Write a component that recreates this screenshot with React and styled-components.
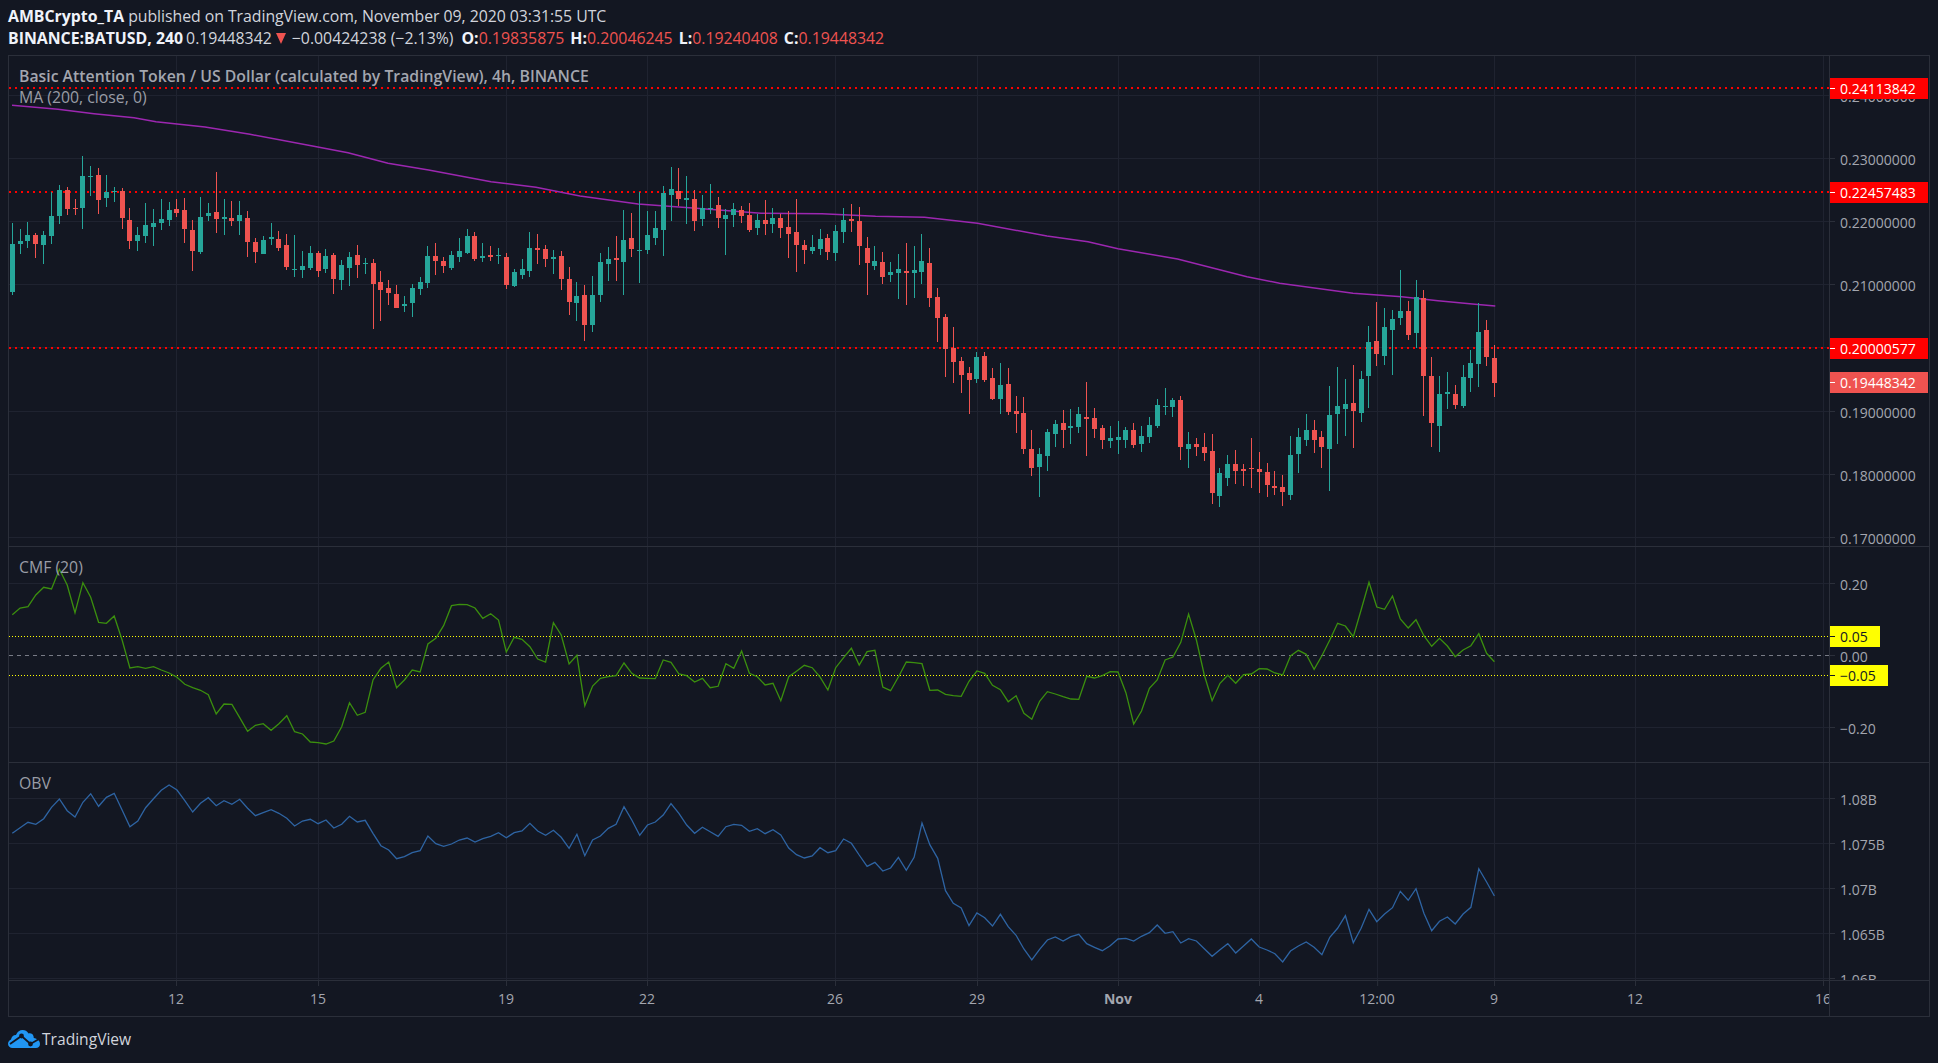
import React from "react";
import styled, { createGlobalStyle } from "styled-components";

const BG = "#131722";
const GRID = "#1f2330";
const BORDER = "#2b2f3a";
const TEAL = "#26a69a";
const RED = "#ef5350";
const AXIS_TEXT = "#a3a6af";
const FONT = `"Open Sans", "Noto Sans", "Liberation Sans", sans-serif`;

const seg = (y0, rows) =>
  rows.map(([up, wt, bt, bb, wb]) => ({
    up: up === 1,
    wt: y0 + wt / 3,
    bt: y0 + bt / 3,
    bb: y0 + bb / 3,
    wb: y0 + wb / 3,
  }));

const CANDLES = [
  ...seg(150, [
    [1,219,282,426,435],[1,237,273,282,312],[1,216,255,273,294],[0,249,255,282,324],[1,243,255,285,342],
    [1,126,198,258,282],[1,105,120,198,222],[0,111,120,177,195],[0,147,174,177,195],[1,18,78,174,237],
    [1,48,78,81,138],[0,54,75,150,192],[1,75,126,144,171],[1,111,123,126,156],[0,114,123,204,237],
    [0,174,210,273,297],[1,231,255,273,303],[1,159,225,258,279],[1,177,219,231,288],[1,147,207,219,240],
    [1,156,180,210,228],[0,147,177,189,201],[0,144,180,237,279],[0,210,240,303,363],[1,141,201,306,312],
    [1,159,189,198,213],[0,66,186,207,249],[1,147,201,207,255],[0,153,204,213,228],[1,153,195,213,255],
    [0,183,204,276,321],
  ]),
  ...seg(190, [
    [0,144,156,186,219],[1,138,150,192,192],[1,99,141,147,165],[0,123,147,174,183],[0,132,165,231,240],
    [1,135,237,240,261],[1,183,228,240,264],[1,168,189,234,240],[0,183,189,243,261],[1,177,198,237,249],
    [0,189,195,267,312],[1,210,225,270,300],[1,186,201,234,288],[0,165,195,225,264],[1,204,219,222,252],
    [0,207,219,282,417],[0,243,276,300,393],[0,270,294,309,345],[0,285,312,354,354],[1,318,342,348,366],
    [1,282,294,339,381],[1,261,276,297,315],[1,168,198,279,294],[0,159,198,213,255],[0,201,213,228,249],
    [1,183,195,234,240],[1,144,183,201,216],[1,117,138,189,192],[0,126,138,207,213],[1,159,198,204,216],
    [0,168,195,201,213],[1,174,195,198,222],
  ]),
  ...seg(150, [
    [0,309,321,405,417],[1,357,366,408,411],[1,327,357,375,387],[1,246,294,363,381],[0,252,294,300,342],
    [0,285,297,327,351],[1,300,321,327,372],[0,303,318,387,420],[0,351,387,456,495],[1,396,438,459,513],
    [0,405,435,525,573],[1,378,435,525,546],[1,309,336,435,456],[1,291,327,342,393],[0,258,324,330,393],
    [1,180,270,336,435],[0,189,264,297,321],[1,126,300,303,399],[1,183,255,300,312],[1,183,234,264,285],
    [1,108,129,240,318],[1,51,117,135,213],[0,54,123,147,168],[1,78,144,150,222],[0,120,147,213,243],
    [1,135,174,207,228],
    [1,102,174,177,192],[0,141,165,204,234],[1,177,195,207,315],[1,159,177,195,231],[0,168,180,198,219],
    [0,159,195,240,246],[1,192,210,234,255],[0,150,210,222,255],[1,174,204,222,249],[0,192,204,234,264],
    [0,183,231,252,324],[0,147,246,285,366],[0,270,285,300,342],[1,255,291,303,312],[1,237,267,297,315],
    [0,252,264,306,330],[1,225,243,309,333],[1,174,210,246,279],[0,162,207,213,246],[0,171,213,288,345],
    [0,261,294,339,435],[1,288,333,348,360],[0,306,336,381,402],[1,336,366,375,396],[1,312,357,369,447],
    [0,279,363,369,465],[1,288,360,369,444],[1,252,333,366,402],[0,294,339,444,471],[0,414,441,504,576],
    [0,492,501,597,681],[0,531,594,636,699],[0,621,633,675,729],[0,651,669,690,792],[1,606,621,687,699],
    [0,606,618,690,696],[0,654,684,747,750],[1,639,705,747,792],[0,654,702,786,795],[0,738,783,792,849],
    [0,741,789,897,912],[0,840,897,954,978],[1,894,912,951,1041],[1,837,846,918,963],[1,810,822,852,891],
    [0,780,819,840,894],[1,777,828,834,882],[1,771,792,831,849],[0,696,801,807,918],[0,774,804,837,864],
    [0,825,834,870,897],[1,828,864,873,894],[1,813,861,870,912],[1,831,840,870,894],[0,819,840,885,894],
    [1,828,858,882,906],[1,801,825,861,879],[1,747,765,828,834],[1,714,768,771,795],[1,744,750,771,801],
    [0,738,750,891,930],[1,846,882,897,954],[0,864,882,891,918],[0,849,891,909,933],[0,852,903,1029,1062],
    [1,954,969,1038,1071],[1,915,942,984,1008],[0,900,942,963,1002],[0,942,957,963,1008],[0,864,954,957,1014],
    [0,906,957,966,1029],[0,939,966,1005,1041],[0,963,1008,1014,1035],[0,975,1011,1026,1068],[1,858,915,1035,1050],
    [1,834,861,912,969],[1,792,840,870,888],[0,810,840,870,909],[0,843,861,891,954],[1,708,795,897,1023],
    [1,651,768,792,882],
  ]),
  ...seg(250, [
    [1,387,462,477,558],[0,345,459,483,594],[1,363,387,489,516],[1,228,276,378,474],[0,156,273,312,348],
    [1,174,231,318,345],[1,180,207,240,375],[1,60,183,204,225],[0,153,183,255,270],[1,90,141,249,294],
    [0,120,144,378,498],[0,321,378,519,591],[1,378,432,528,606],[1,366,426,432,477],[0,405,432,465,477],
    [1,345,381,468,474],[1,300,339,384,426],[1,159,246,342,411],[0,210,240,321,348],[0,285,324,399,441],
  ]),
];

const xOf = (i) => 12.3 + i * 7.842;

const MA_POINTS = [
  [12,105.3],[58,109.3],[94,113.7],[134,117.7],[156,121.7],[205,127],[250,134.3],[312.5,146],[348,152.7],[388,163.3],
  [428.6,170],[491,181.7],[536,187.3],[580,196],[638,204],[696,208.3],[761,213.3],[822,213.7],[875.5,216.3],[924.5,217.3],
  [977.5,223.3],[1047,236],[1088,241.7],[1118,248.7],[1177.5,259],[1247,276.7],[1279.6,283.3],[1353,293.3],[1401.7,296.7],
  [1438,300.7],[1475,304.3],[1495.3,306],
];

const CMF_RAW = [
  224,204,200,165,142,147,88,135,218,128,172,247,250,228,300,384,380,385,380,390,
  399,412,433,443,451,464,522,492,493,533,574,556,551,571,551,527,575,582,606,608,
  612,603,560,488,526,517,420,385,366,443,420,390,396,312,295,257,197,193,194,204,
  235,221,240,336,292,298,320,357,366,248,285,372,346,497,438,415,410,407,369,400,
  414,415,416,360,367,402,407,426,415,443,439,371,385,333,400,410,435,430,482,410,
  394,376,383,411,450,383,353,325,375,335,331,441,452,411,366,368,371,451,450,463,
  467,469,424,393,400,436,449,485,467,520,538,484,455,462,470,477,478,409,414,407,
  395,396,458,552,513,445,420,360,351,307,222,300,405,482,430,406,430,404,402,386,
  387,399,405,348,331,343,388,347,300,250,258,290,210,127,201,208,168,237,264,239,
  287,319,295,318,350,330,317,281,340,365,
];

const OBV_TOP = [
  220,203,187,193,176,142,117,152,171,127,101,139,112,100,150,200,183,143,116,91,
  75,90,122,156,130,113,137,122,133,118,145,167,158,149,160,175,198,183,178,191,
  180,204,193,169,186,181,220,257,270,296,290,278,272,228,251,259,252,240,234,246,
  236,229,218,233,218,213,190,213,226,211,232,265,223,287,240,228,205,193,140,180,
  226,195,186,165,131,160,195,220,
];
const OBV_BOTTOM = [
  862,875,889,860,853,856,874,866,881,869,885,924,944,954,948,923,938,932,897,910,
  945,979,967,993,984,952,991,952,849,914,955,1052,1090,1104,1157,1119,1133,1158,1123,1160,
  1186,1227,1260,1228,1200,1191,1203,1190,1183,1211,1222,1232,1217,1197,1195,1203,1189,1178,1155,1180,
  1175,1209,1196,1203,1226,1249,1229,1211,1239,1218,1197,1221,1230,1241,1266,1233,1218,1206,1222,1244,
  1192,1165,1127,1208,1165,1108,1145,1122,1103,1054,1081,1046,1120,1172,1144,1131,1152,1122,1102,986,1026,1068,
];

const toPoints = (arr) => arr.map(([x, y]) => `${x},${y}`).join(" ");
const cmfLine = toPoints(CMF_RAW.map((z, i) => [xOf(i).toFixed(1), (540 + z / 3).toFixed(1)]));
const obvLine = toPoints(
  [...OBV_TOP.map((z) => 760 + z / 3), ...OBV_BOTTOM.map((z) => 540 + z / 3)].map((y, i) => [
    xOf(i).toFixed(1),
    y.toFixed(1),
  ])
);

const TIME_TICKS = [
  { x: 176, label: "12" },
  { x: 318, label: "15" },
  { x: 506, label: "19" },
  { x: 647, label: "22" },
  { x: 835, label: "26" },
  { x: 977, label: "29" },
  { x: 1118, label: "Nov", strong: true },
  { x: 1259, label: "4" },
  { x: 1377, label: "12:00" },
  { x: 1494, label: "9" },
  { x: 1635, label: "12" },
  { x: 1823, label: "16" },
];

const MAIN_TOP = 56, MAIN_H = 490;
const CMF_TOP = 547, CMF_H = 215;
const OBV_TOP_Y = 763, OBV_H = 217;

const GlobalStyle = createGlobalStyle`
  html, body { margin: 0; padding: 0; background: ${BG}; }
  #root { min-height: 100vh; }
`;

const Page = styled.div`
  width: 1938px;
  height: 1063px;
  overflow: hidden;
  background: ${BG};
  font-family: ${FONT};
  display: flex;
  flex-direction: column;
`;

const Header = styled.header`
  height: 55px;
  padding: 5px 0 0 8px;
  box-sizing: border-box;
`;

const HeaderRow = styled.div`
  display: flex;
  align-items: center;
  height: 22px;
  font-size: 15.85px;
  color: #d1d4dc;
  white-space: nowrap;
`;

const Author = styled.strong`
  font-weight: 700;
  color: #f0f3fa;
  margin-right: ${(p) => p.$gap || 0}px;
`;

const Plain = styled.span`
  margin-right: ${(p) => p.$gap || 0}px;
`;

const Published = styled.span`
  letter-spacing: -0.05px;
`;

const RedValue = styled.span`
  color: ${RED};
  margin-right: ${(p) => p.$gap || 0}px;
`;

const DownArrow = styled.i`
  display: block;
  width: 0;
  height: 0;
  margin: 1px 6px 0 4px;
  border-left: 5.5px solid transparent;
  border-right: 5.5px solid transparent;
  border-top: 11px solid ${RED};
`;

const Frame = styled.section`
  margin-left: 8px;
  width: 1922px;
  box-sizing: border-box;
  border: 1px solid ${BORDER};
  display: flex;
  flex-direction: column;
`;

const Pane = styled.div`
  display: grid;
  grid-template-columns: 1820px 100px;
  height: ${(p) => p.$h + 1}px;
  box-sizing: border-box;
  border-bottom: 1px solid ${BORDER};
`;

const Plot = styled.div`
  position: relative;
  overflow: hidden;
`;

const PlotSvg = styled.svg`
  display: block;
`;

const Legend = styled.div`
  position: absolute;
  left: 10px;
  top: 10px;
  font-size: 15.8px;
  line-height: 21px;
  color: #9a9da6;
  white-space: nowrap;
`;

const LegendTitle = styled.div`
  font-weight: 600;
  color: #a3a6af;
`;

const Axis = styled.div`
  position: relative;
  overflow: hidden;
  border-left: 1px solid ${BORDER};
  box-sizing: border-box;
`;

const AxisTick = styled.div`
  position: absolute;
  left: 0;
  height: 21px;
  margin-top: -9px;
  padding-left: 10px;
  font-size: 14px;
  line-height: 21px;
  color: ${AXIS_TEXT};
  white-space: nowrap;
  &::before {
    content: "";
    position: absolute;
    left: 0;
    top: 9px;
    width: 5px;
    height: 1px;
    background: #2b2f3a;
  }
`;

const AxisFlag = styled.div`
  position: absolute;
  z-index: 1;
  left: -1px;
  height: 21px;
  margin-top: -10px;
  padding: 0 12px 0 11px;
  font-size: 14px;
  line-height: 21px;
  color: ${(p) => p.$fg};
  background: ${(p) => p.$bg};
  white-space: nowrap;
  &::before {
    content: "";
    position: absolute;
    left: 1px;
    top: 10px;
    width: 5px;
    height: 1px;
    background: ${(p) => p.$fg};
  }
`;

const TimeRow = styled.div`
  display: grid;
  grid-template-columns: 1820px 100px;
  height: 35px;
`;

const TimeStrip = styled.div`
  position: relative;
  overflow: hidden;
`;

const TimeTick = styled.div`
  position: absolute;
  top: 0;
  bottom: 0;
  transform: translateX(-50%);
  font-size: 14px;
  line-height: 36px;
  font-weight: ${(p) => (p.$strong ? 700 : 400)};
  color: ${AXIS_TEXT};
  &::before {
    content: "";
    position: absolute;
    left: 50%;
    top: 0;
    width: 1px;
    height: 5px;
    background: ${BORDER};
  }
`;

const TimeCorner = styled.div`
  border-left: 1px solid ${BORDER};
`;

const Footer = styled.footer`
  display: flex;
  align-items: center;
  gap: 2px;
  padding: 13px 0 0 8px;
`;

const Brand = styled.span`
  font-size: 15.6px;
  line-height: 18px;
  color: #d1d4dc;
`;

const Grid = ({ top, h, rows }) => (
  <g stroke={GRID} strokeWidth="1" shapeRendering="crispEdges">
    {rows.map((y) => (
      <line key={y} x1="9" x2="1829" y1={Math.floor(y) + 0.5} y2={Math.floor(y) + 0.5} />
    ))}
    {TIME_TICKS.map((t) => (
      <line key={t.x} x1={t.x + 0.5} x2={t.x + 0.5} y1={top} y2={top + h} />
    ))}
  </g>
);

const Candle = ({ c, i }) => {
  const x = Math.floor(xOf(i));
  const fill = c.up ? TEAL : RED;
  const y = Math.round(c.bt);
  const h = Math.max(Math.round(c.bb) - y, 1);
  return (
    <g fill={fill} shapeRendering="crispEdges">
      <rect x={x} y={Math.round(c.wt)} width="1" height={Math.max(Math.round(c.wb) - Math.round(c.wt), 1)} />
      <rect x={x - 2} y={y} width="5" height={h} />
    </g>
  );
};

const LevelLine = ({ y }) => (
  <line x1="9" x2="1829" y1={y} y2={y} stroke="#ff0000" strokeWidth="2" strokeDasharray="2 4" shapeRendering="crispEdges" />
);

const MAIN_TICKS = [
  [95, "0.24000000"],
  [158, "0.23000000"],
  [221, "0.22000000"],
  [284, "0.21000000"],
  [411, "0.19000000"],
  [474, "0.18000000"],
  [537, "0.17000000"],
];

const MAIN_FLAGS = [
  [88, "0.24113842", "#ff0000"],
  [192, "0.22457483", "#ff0000"],
  [348, "0.20000577", "#ff0000"],
  [382, "0.19448342", "#ef5350"],
];

const CMF_TICKS = [
  [583, "0.20"],
  [655, "0.00"],
  [727, "−0.20"],
];

const OBV_TICKS = [
  [798, "1.08B"],
  [843, "1.075B"],
  [888, "1.07B"],
  [933, "1.065B"],
  [978, "1.06B"],
];

const Logo = () => (
  <svg width="32" height="18" viewBox="0 0 32 18" aria-hidden="true">
    <path
      fill="#2196f3"
      d="M4.5 18C2 18 0 16.2 0 13.8 0 11.8 1.2 10.2 3 9.4 3.4 6.6 5.4 4.8 8 4.9 9.4 1.9 11.8 0 14.6 0c2.5 0 4.6 1.2 6 3.4 2.3-.6 4.4.7 5 3 .1.5.2 1 .1 1.6C29.3 8.6 32 10.8 32 14c0 2.4-1.8 4-4 4Z"
    />
    <polyline points="2,14 13.5,6 22.5,14 31,9" fill="none" stroke={BG} strokeWidth="1.8" />
    <circle cx="13.5" cy="6" r="2.4" fill={BG} />
    <circle cx="22.5" cy="14" r="2.4" fill={BG} />
  </svg>
);

export default function App() {
  return (
    <Page>
      <GlobalStyle />
      <Header>
        <HeaderRow>
          <Author $gap={4}>AMBCrypto_TA</Author>
          <Published>published on TradingView.com, November 09, 2020 03:31:55 UTC</Published>
        </HeaderRow>
        <HeaderRow>
          <Author $gap={3}>BINANCE:BATUSD, 240</Author>
          <Plain>0.19448342</Plain>
          <DownArrow />
          <Plain $gap={8}>−0.00424238 (−2.13%)</Plain>
          <Author>O:</Author>
          <RedValue $gap={6}>0.19835875</RedValue>
          <Author>H:</Author>
          <RedValue $gap={6}>0.20046245</RedValue>
          <Author>L:</Author>
          <RedValue $gap={6}>0.19240408</RedValue>
          <Author>C:</Author>
          <RedValue>0.19448342</RedValue>
        </HeaderRow>
      </Header>

      <Frame>
        <Pane $h={MAIN_H}>
          <Plot>
            <PlotSvg width="1820" height={MAIN_H} viewBox={`9 ${MAIN_TOP} 1820 ${MAIN_H}`}>
              <Grid top={MAIN_TOP} h={MAIN_H} rows={[95, 158, 221, 284, 347, 411, 474, 537]} />
              <LevelLine y={88} />
              <LevelLine y={192} />
              <LevelLine y={348} />
              <polyline points={toPoints(MA_POINTS)} fill="none" stroke="#9c27b0" strokeWidth="1.5" />
              {CANDLES.map((c, i) => (
                <Candle key={i} c={c} i={i} />
              ))}
            </PlotSvg>
            <Legend>
              <LegendTitle>Basic Attention Token / US Dollar (calculated by TradingView), 4h, BINANCE</LegendTitle>
              <div>MA (200, close, 0)</div>
            </Legend>
          </Plot>
          <Axis>
            {MAIN_TICKS.map(([y, t]) => (
              <AxisTick key={t} style={{ top: y - MAIN_TOP }}>{t}</AxisTick>
            ))}
            {MAIN_FLAGS.map(([y, t, bg]) => (
              <AxisFlag key={t} $bg={bg} $fg="#ffffff" style={{ top: y - MAIN_TOP }}>{t}</AxisFlag>
            ))}
          </Axis>
        </Pane>

        <Pane $h={CMF_H}>
          <Plot>
            <PlotSvg width="1820" height={CMF_H} viewBox={`9 ${CMF_TOP} 1820 ${CMF_H}`}>
              <Grid top={CMF_TOP} h={CMF_H} rows={[583, 727]} />
              <line x1="9" x2="1829" y1="655.5" y2="655.5" stroke="#787b86" strokeDasharray="4 4" shapeRendering="crispEdges" />
              <line x1="9" x2="1829" y1="636.5" y2="636.5" stroke="#ffff00" strokeDasharray="1 2" shapeRendering="crispEdges" />
              <line x1="9" x2="1829" y1="675.5" y2="675.5" stroke="#ffff00" strokeDasharray="1 2" shapeRendering="crispEdges" />
              <polyline points={cmfLine} fill="none" stroke="#3b8f0e" strokeWidth="1.3" />
            </PlotSvg>
            <Legend>CMF (20)</Legend>
          </Plot>
          <Axis>
            {CMF_TICKS.map(([y, t]) => (
              <AxisTick key={t} style={{ top: y - CMF_TOP }}>{t}</AxisTick>
            ))}
            <AxisFlag $bg="#ffff00" $fg="#131722" style={{ top: 636 - CMF_TOP }}>0.05</AxisFlag>
            <AxisFlag $bg="#ffff00" $fg="#131722" style={{ top: 675 - CMF_TOP }}>−0.05</AxisFlag>
          </Axis>
        </Pane>

        <Pane $h={OBV_H}>
          <Plot>
            <PlotSvg width="1820" height={OBV_H} viewBox={`9 ${OBV_TOP_Y} 1820 ${OBV_H}`}>
              <Grid top={OBV_TOP_Y} h={OBV_H} rows={[798, 843, 888, 933, 978]} />
              <polyline points={obvLine} fill="none" stroke="#2e64a3" strokeWidth="1.3" />
            </PlotSvg>
            <Legend>OBV</Legend>
          </Plot>
          <Axis>
            {OBV_TICKS.map(([y, t]) => (
              <AxisTick key={t} style={{ top: y - OBV_TOP_Y }}>{t}</AxisTick>
            ))}
          </Axis>
        </Pane>

        <TimeRow>
          <TimeStrip>
            {TIME_TICKS.map((t) => (
              <TimeTick key={t.x} $strong={t.strong} style={{ left: t.x - 9 }}>{t.label}</TimeTick>
            ))}
          </TimeStrip>
          <TimeCorner />
        </TimeRow>
      </Frame>

      <Footer>
        <Logo />
        <Brand>TradingView</Brand>
      </Footer>
    </Page>
  );
}
